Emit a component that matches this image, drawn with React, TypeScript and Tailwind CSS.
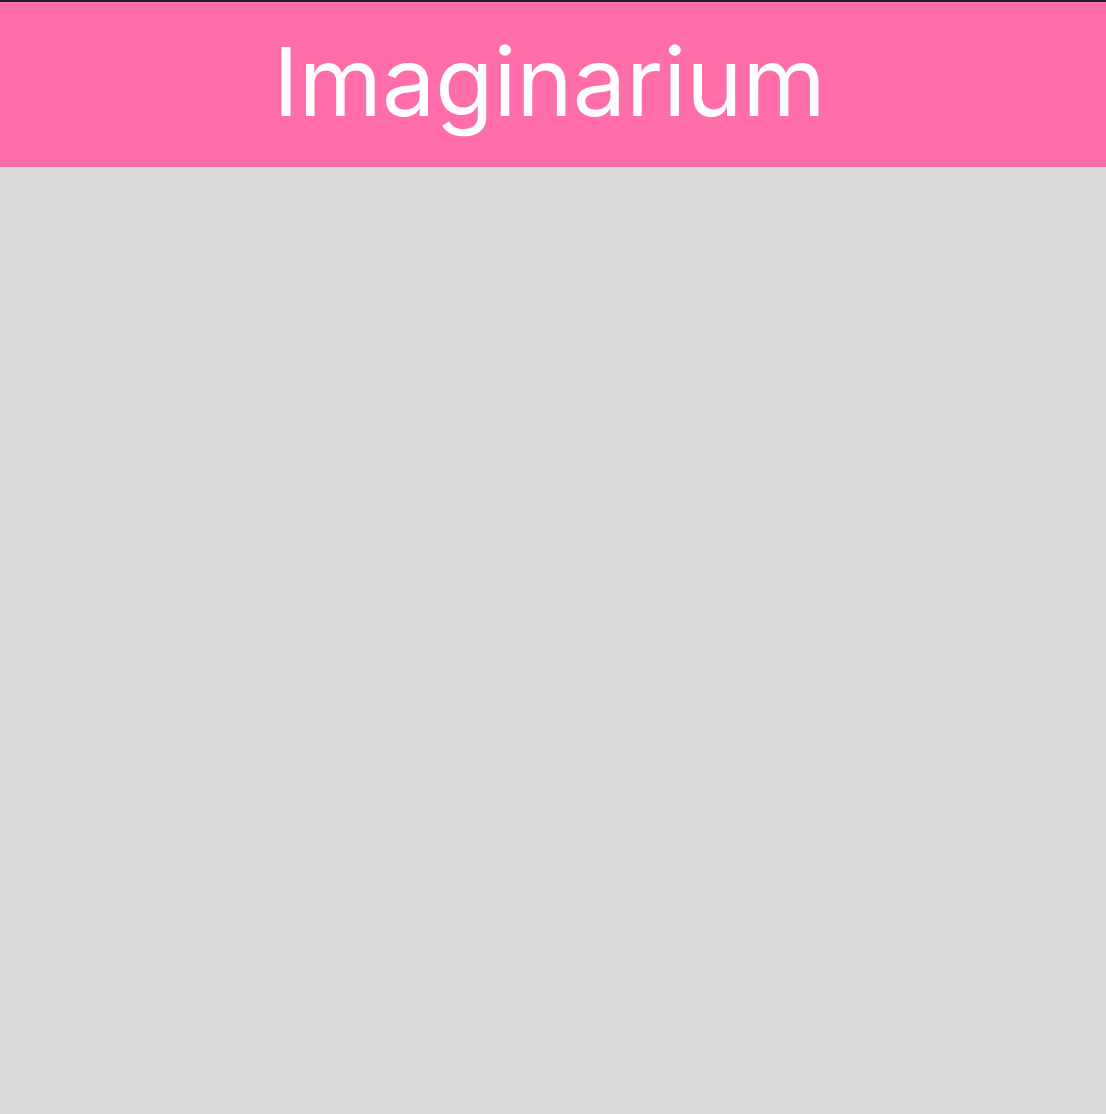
export default function App() {
  return (
    <div className="min-h-[1114px] w-full bg-[#d9d9d9]" style={{ fontFamily: "Inter, 'Noto Sans', sans-serif" }}>
      <header className="flex h-[167px] items-center justify-center border-t-2 border-[#222222] bg-[#ff6ea9] pb-[6px] pr-[7px]">
        <h1 className="text-[95px] font-normal leading-none text-white">Imaginarium</h1>
      </header>
    </div>
  );
}
